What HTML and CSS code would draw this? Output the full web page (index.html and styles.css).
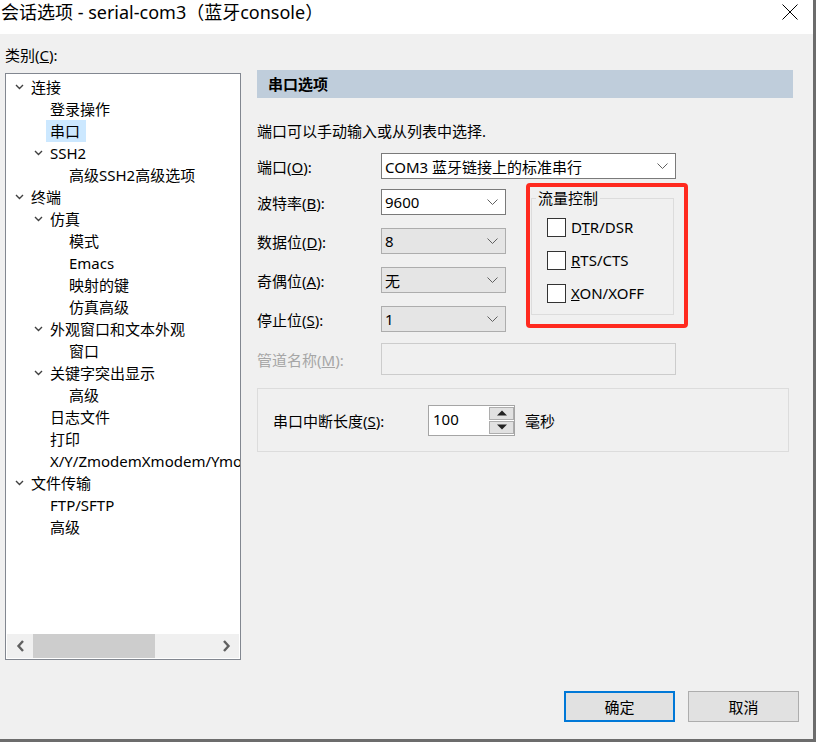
FILE: index.html
```html
<!DOCTYPE html>
<html lang="zh-CN">
<head>
<meta charset="utf-8">
<title>会话选项</title>
<link rel="stylesheet" href="styles.css">
</head>
<body>
<div class="window">
  <div class="titlebar">
    <div class="title">会话选项 - serial-com3（蓝牙console）</div>
    <svg class="close" width="16" height="16" viewBox="0 0 16 16"><path d="M0.5 0.5 L15.5 15.5 M15.5 0.5 L0.5 15.5" stroke="#000" stroke-width="1" fill="none"/></svg>
  </div>
  <div class="main">
    <div class="left">
      <div class="cat-label">类别(<u>C</u>):</div>
      <div class="tree">
        <div class="tree-list">
          <div class="node l0"><span class="tog"><svg width="9" height="6" viewBox="0 0 9 6"><path d="M1 1 L4.5 4.5 L8 1" stroke="#404040" stroke-width="1.4" fill="none"/></svg></span><span class="txt">连接</span></div>
          <div class="node l1"><span class="tog"></span><span class="txt">登录操作</span></div>
          <div class="node l1"><span class="tog"></span><span class="txt sel">串口</span></div>
          <div class="node l1"><span class="tog"><svg width="9" height="6" viewBox="0 0 9 6"><path d="M1 1 L4.5 4.5 L8 1" stroke="#404040" stroke-width="1.4" fill="none"/></svg></span><span class="txt">SSH2</span></div>
          <div class="node l2"><span class="tog"></span><span class="txt">高级SSH2高级选项</span></div>
          <div class="node l0"><span class="tog"><svg width="9" height="6" viewBox="0 0 9 6"><path d="M1 1 L4.5 4.5 L8 1" stroke="#404040" stroke-width="1.4" fill="none"/></svg></span><span class="txt">终端</span></div>
          <div class="node l1"><span class="tog"><svg width="9" height="6" viewBox="0 0 9 6"><path d="M1 1 L4.5 4.5 L8 1" stroke="#404040" stroke-width="1.4" fill="none"/></svg></span><span class="txt">仿真</span></div>
          <div class="node l2"><span class="tog"></span><span class="txt">模式</span></div>
          <div class="node l2"><span class="tog"></span><span class="txt">Emacs</span></div>
          <div class="node l2"><span class="tog"></span><span class="txt">映射的键</span></div>
          <div class="node l2"><span class="tog"></span><span class="txt">仿真高级</span></div>
          <div class="node l1"><span class="tog"><svg width="9" height="6" viewBox="0 0 9 6"><path d="M1 1 L4.5 4.5 L8 1" stroke="#404040" stroke-width="1.4" fill="none"/></svg></span><span class="txt">外观窗口和文本外观</span></div>
          <div class="node l2"><span class="tog"></span><span class="txt">窗口</span></div>
          <div class="node l1"><span class="tog"><svg width="9" height="6" viewBox="0 0 9 6"><path d="M1 1 L4.5 4.5 L8 1" stroke="#404040" stroke-width="1.4" fill="none"/></svg></span><span class="txt">关键字突出显示</span></div>
          <div class="node l2"><span class="tog"></span><span class="txt">高级</span></div>
          <div class="node l1"><span class="tog"></span><span class="txt">日志文件</span></div>
          <div class="node l1"><span class="tog"></span><span class="txt">打印</span></div>
          <div class="node l1"><span class="tog"></span><span class="txt">X/Y/ZmodemXmodem/Ymodem</span></div>
          <div class="node l0"><span class="tog"><svg width="9" height="6" viewBox="0 0 9 6"><path d="M1 1 L4.5 4.5 L8 1" stroke="#404040" stroke-width="1.4" fill="none"/></svg></span><span class="txt">文件传输</span></div>
          <div class="node l1"><span class="tog"></span><span class="txt">FTP/SFTP</span></div>
          <div class="node l1"><span class="tog"></span><span class="txt">高级</span></div>
        </div>
        <div class="hscroll">
          <span class="arrow"><svg width="9" height="12" viewBox="0 0 9 12"><path d="M7 1 L2.5 6 L7 11" stroke="#606060" stroke-width="2.4" fill="none"/></svg></span>
          <div class="track"><div class="thumb"></div></div>
          <span class="arrow"><svg width="9" height="12" viewBox="0 0 9 12"><path d="M2 1 L6.5 6 L2 11" stroke="#606060" stroke-width="2.4" fill="none"/></svg></span>
        </div>
      </div>
    </div>
    <div class="right">
      <div class="header">串口选项</div>
      <div class="desc">端口可以手动输入或从列表中选择.</div>
      <div class="row port">
        <div class="lbl">端口(<u>O</u>):</div>
        <div class="combo white wide"><span class="val">COM3 蓝牙链接上的标准串行</span><svg width="11" height="6" viewBox="0 0 11 6"><path d="M0.5 0.5 L5.5 5.5 L10.5 0.5" stroke="#606060" fill="none"/></svg></div>
      </div>
      <div class="mid">
        <div class="fields">
          <div class="row">
            <div class="lbl">波特率(<u>B</u>):</div>
            <div class="combo white"><span class="val">9600</span><svg width="11" height="6" viewBox="0 0 11 6"><path d="M0.5 0.5 L5.5 5.5 L10.5 0.5" stroke="#606060" fill="none"/></svg></div>
          </div>
          <div class="row">
            <div class="lbl">数据位(<u>D</u>):</div>
            <div class="combo gray"><span class="val">8</span><svg width="11" height="6" viewBox="0 0 11 6"><path d="M0.5 0.5 L5.5 5.5 L10.5 0.5" stroke="#606060" fill="none"/></svg></div>
          </div>
          <div class="row">
            <div class="lbl">奇偶位(<u>A</u>):</div>
            <div class="combo gray"><span class="val">无</span><svg width="11" height="6" viewBox="0 0 11 6"><path d="M0.5 0.5 L5.5 5.5 L10.5 0.5" stroke="#606060" fill="none"/></svg></div>
          </div>
          <div class="row">
            <div class="lbl">停止位(<u>S</u>):</div>
            <div class="combo gray"><span class="val">1</span><svg width="11" height="6" viewBox="0 0 11 6"><path d="M0.5 0.5 L5.5 5.5 L10.5 0.5" stroke="#606060" fill="none"/></svg></div>
          </div>
        </div>
        <div class="flow">
          <div class="legend">流量控制</div>
          <div class="checks">
            <div class="chk"><span class="box"></span><span>D<u>T</u>R/DSR</span></div>
            <div class="chk"><span class="box"></span><span><u>R</u>TS/CTS</span></div>
            <div class="chk"><span class="box"></span><span><u>X</u>ON/XOFF</span></div>
          </div>
          <div class="mark"></div>
        </div>
      </div>
      <div class="row pipe">
        <div class="lbl disabled">管道名称(<u>M</u>):</div>
        <div class="field-disabled"></div>
      </div>
      <div class="breakbox">
        <div class="blbl">串口中断长度(<u>S</u>):</div>
        <div class="spin">
          <div class="spin-val">100</div>
          <div class="spin-btns">
            <div class="sbtn"><svg width="10" height="6" viewBox="0 0 10 6"><polygon points="0,5.5 5,0.5 10,5.5" fill="#222"/></svg></div>
            <div class="sbtn"><svg width="10" height="6" viewBox="0 0 10 6"><polygon points="0,0.5 10,0.5 5,5.5" fill="#222"/></svg></div>
          </div>
        </div>
        <div class="unit">毫秒</div>
      </div>
    </div>
  </div>
  <div class="footer">
    <div class="btn default">确定</div>
    <div class="btn">取消</div>
  </div>
</div>
</body>
</html>
```

FILE: styles.css
```css
html, body {
  margin: 0;
  padding: 0;
  background: #ffffff;
}
body {
  font-family: "Noto Sans", "Noto Sans CJK SC", sans-serif;
  font-size: 15px;
  color: #000;
}
.window {
  width: 813px;
  height: 739px;
  background: #f0f0f0;
  border-right: 3px solid #6c6c6c;
  border-bottom: 3px solid #6c6c6c;
  display: flex;
  flex-direction: column;
}
.titlebar {
  height: 34px;
  background: #ffffff;
  display: flex;
  justify-content: space-between;
  align-items: flex-start;
  padding: 0 15px 0 1px;
}
.title {
  font-size: 18px;
  line-height: 24px;
}
.close {
  margin-top: 4px;
}
.main {
  display: flex;
  height: 626px;
  padding-left: 5px;
}
.left {
  width: 236px;
  display: flex;
  flex-direction: column;
}
.cat-label {
  line-height: 22px;
  padding-top: 10px;
  margin-bottom: 7px;
}
.tree {
  height: 587px;
  box-sizing: border-box;
  border: 1px solid #828790;
  background: #ffffff;
  display: flex;
  flex-direction: column;
  overflow: hidden;
}
.tree-list {
  flex: 1;
  padding-top: 2px;
  overflow: hidden;
}
.node {
  height: 22px;
  line-height: 22px;
  display: flex;
  align-items: center;
  white-space: nowrap;
}
.node.l0 { padding-left: 4px; }
.node.l1 { padding-left: 23px; }
.node.l2 { padding-left: 42px; }
.tog {
  width: 21px;
  flex: none;
  display: flex;
  align-items: center;
  padding-left: 5px;
  box-sizing: border-box;
}
.txt.sel {
  background: #cce8ff;
  padding: 0 6px 0 4px;
  margin-left: -4px;
}
.hscroll {
  height: 24px;
  margin: 0 1px 1px 1px;
  background: #f0f0f0;
  display: flex;
  align-items: center;
}
.arrow {
  width: 26px;
  display: flex;
  justify-content: center;
  align-items: center;
  flex: none;
}
.track {
  flex: 1;
  height: 24px;
}
.thumb {
  width: 122px;
  height: 24px;
  background: #cdcdcd;
}
.right {
  width: 536px;
  margin-left: 16px;
  padding-top: 36px;
}
.header {
  height: 28px;
  line-height: 28px;
  background: #bfcddb;
  font-weight: bold;
  padding-left: 11px;
}
.desc {
  margin-top: 22px;
  line-height: 22px;
}
.row {
  display: flex;
  align-items: center;
  height: 26px;
}
.row.port {
  margin-top: 11px;
}
.lbl {
  width: 124px;
  flex: none;
}
.lbl.disabled {
  color: #a6a6a6;
}
.combo {
  box-sizing: border-box;
  height: 26px;
  width: 125px;
  display: flex;
  align-items: center;
  justify-content: space-between;
  padding: 0 7px 0 3px;
}
.combo.wide {
  width: 295px;
}
.combo.white {
  background: #ffffff;
  border: 1px solid #7a7a7a;
}
.combo.gray {
  background: #e5e5e5;
  border: 1px solid #adadad;
}
.mid {
  display: flex;
  margin-top: 10px;
}
.fields {
  width: 249px;
  display: flex;
  flex-direction: column;
  gap: 13px;
}
.flow {
  position: relative;
  margin-left: 25px;
  margin-top: 9px;
  width: 143px;
  height: 117px;
  box-sizing: border-box;
  border: 1px solid #dcdcdc;
  padding-left: 15px;
}
.legend {
  width: fit-content;
  background: #f0f0f0;
  line-height: 20px;
  height: 20px;
  margin-top: -11px;
  margin-left: -11px;
  padding: 0 2px;
}
.checks {
  display: flex;
  flex-direction: column;
  gap: 13px;
  margin-top: 9px;
}
.chk {
  display: flex;
  align-items: center;
  height: 20px;
  gap: 5px;
}
.box {
  width: 19px;
  height: 19px;
  box-sizing: border-box;
  border: 1px solid #333333;
  background: #ffffff;
  flex: none;
}
.mark {
  position: absolute;
  left: -6px;
  top: -16px;
  width: 162px;
  height: 145px;
  box-sizing: border-box;
  border: 4px solid #ff2a1f;
  border-radius: 4px;
}
.row.pipe {
  margin-top: 11px;
  height: 32px;
}
.field-disabled {
  width: 295px;
  height: 32px;
  box-sizing: border-box;
  border: 1px solid #cccccc;
  background: #f0f0f0;
}
.breakbox {
  margin-top: 13px;
  width: 532px;
  height: 64px;
  box-sizing: border-box;
  border: 1px solid #dcdcdc;
  display: flex;
  align-items: center;
  padding-left: 15px;
}
.blbl {
  width: 155px;
  flex: none;
}
.spin {
  width: 87px;
  height: 31px;
  box-sizing: border-box;
  border: 1px solid #a5a5a5;
  display: flex;
  background: #ffffff;
}
.spin-val {
  flex: 1;
  padding-left: 4px;
  line-height: 27px;
}
.spin-btns {
  width: 25px;
  display: flex;
  flex-direction: column;
  justify-content: space-between;
  padding: 1px 0;
  box-sizing: border-box;
}
.sbtn {
  height: 13px;
  box-sizing: border-box;
  background: #e1e1e1;
  border: 1px solid #adadad;
  display: flex;
  align-items: center;
  justify-content: center;
}
.unit {
  margin-left: 10px;
}
.footer {
  display: flex;
  justify-content: flex-end;
  gap: 13px;
  padding-top: 31px;
  padding-right: 14px;
}
.btn {
  width: 111px;
  height: 31px;
  box-sizing: border-box;
  background: #e1e1e1;
  border: 1px solid #adadad;
  display: flex;
  align-items: center;
  justify-content: center;
}
.btn.default {
  border: 2px solid #0078d7;
}
```
